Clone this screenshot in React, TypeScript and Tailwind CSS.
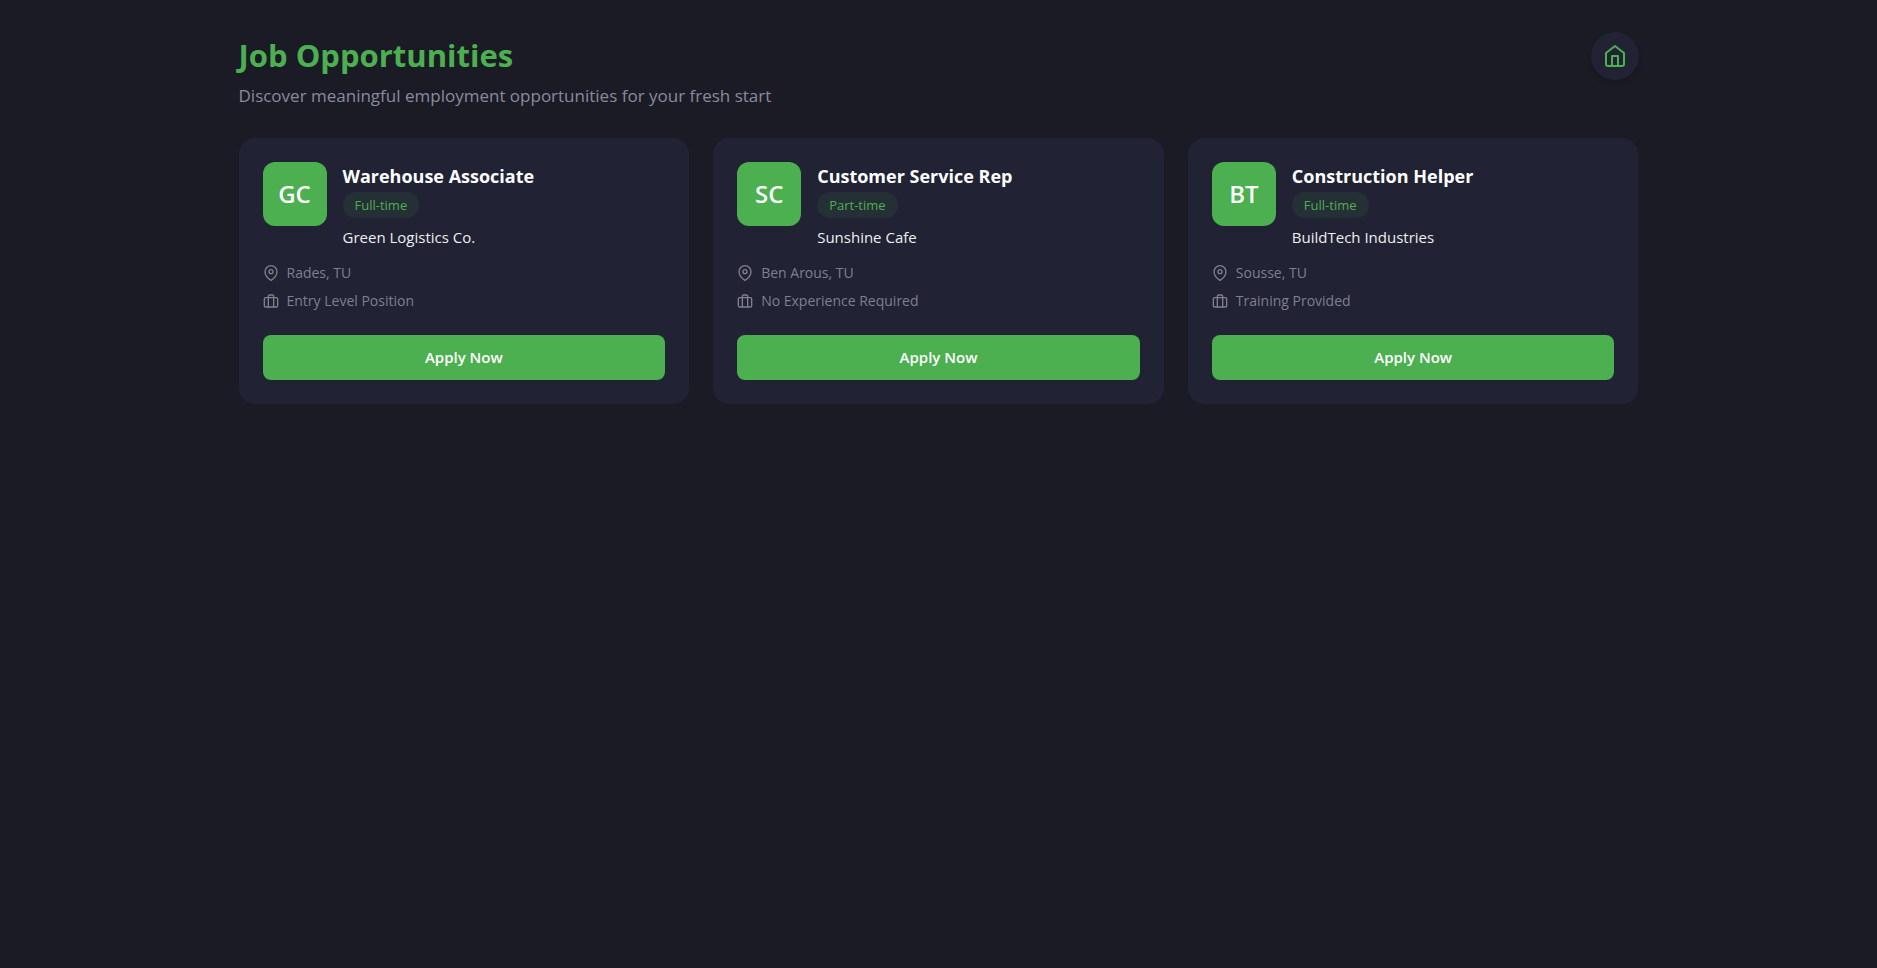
import type { ReactNode } from "react";

type Job = {
  initials: string;
  title: string;
  type: string;
  company: string;
  location: string;
  level: string;
};

const jobs: Job[] = [
  { initials: "GC", title: "Warehouse Associate", type: "Full-time", company: "Green Logistics Co.", location: "Rades, TU", level: "Entry Level Position" },
  { initials: "SC", title: "Customer Service Rep", type: "Part-time", company: "Sunshine Cafe", location: "Ben Arous, TU", level: "No Experience Required" },
  { initials: "BT", title: "Construction Helper", type: "Full-time", company: "BuildTech Industries", location: "Sousse, TU", level: "Training Provided" },
];

function Icon({ className, children }: { className: string; children: ReactNode }) {
  return (
    <svg
      viewBox="0 0 24 24"
      fill="none"
      stroke="currentColor"
      strokeWidth={2}
      strokeLinecap="round"
      strokeLinejoin="round"
      className={className}
      aria-hidden="true"
    >
      {children}
    </svg>
  );
}

function HomeIcon() {
  return (
    <Icon className="size-6">
      <path d="m3 9 9-7 9 7v11a2 2 0 0 1-2 2H5a2 2 0 0 1-2-2z" />
      <polyline points="9 22 9 12 15 12 15 22" />
    </Icon>
  );
}

function PinIcon() {
  return (
    <Icon className="size-4">
      <path d="M21 10c0 7-9 13-9 13s-9-6-9-13a9 9 0 0 1 18 0z" />
      <circle cx="12" cy="10" r="3" />
    </Icon>
  );
}

function CaseIcon() {
  return (
    <Icon className="size-4">
      <rect x="2" y="7" width="20" height="14" rx="2" ry="2" />
      <path d="M16 21V5a2 2 0 0 0-2-2h-4a2 2 0 0 0-2 2v16" />
    </Icon>
  );
}

function JobCard({ job }: { job: Job }) {
  return (
    <article className="rounded-2xl bg-[#212234] p-6">
      <div className="flex items-start gap-4">
        <div className="flex size-16 shrink-0 items-center justify-center rounded-xl bg-[#4caf50] text-2xl font-semibold text-white">
          {job.initials}
        </div>
        <div className="flex flex-col items-start">
          <h2 className="text-lg leading-7 font-bold text-white">{job.title}</h2>
          <span className="mt-0.5 rounded-full bg-[#4caf50]/10 px-3 text-[13px] leading-[26px] text-[#4caf50]">{job.type}</span>
          <p className="mt-[7px] text-[15px] leading-6 font-medium text-[#eeeeee]">{job.company}</p>
        </div>
      </div>
      <ul className="mt-3 flex flex-col gap-1 text-sm leading-6 text-[#7f7f90]">
        <li className="flex items-center gap-2"><PinIcon />{job.location}</li>
        <li className="flex items-center gap-2"><CaseIcon />{job.level}</li>
      </ul>
      <button type="button" className="mt-[22px] block w-full rounded-lg bg-[#4caf50] py-2.5 text-[15px] leading-[25px] font-semibold text-white">
        Apply Now
      </button>
    </article>
  );
}

export default function App() {
  return (
    <main className="min-h-screen bg-[#1b1b26] p-8 font-['Open_Sans','Noto_Sans',sans-serif]">
      <div className="mx-auto max-w-[1400px]">
        <header className="flex items-start justify-between pb-7">
          <div>
            <h1 className="text-[31px] leading-[46px] font-bold text-[#4caf50]">Job Opportunities</h1>
            <p className="mt-1 text-[17px] leading-7 text-[#8a8a9b]">Discover meaningful employment opportunities for your fresh start</p>
          </div>
          <a href="#home" aria-label="Home" className="flex size-12 shrink-0 items-center justify-center rounded-full bg-[#212234] text-[#4caf50] shadow-md">
            <HomeIcon />
          </a>
        </header>
        <section aria-label="Open positions" className="grid grid-cols-1 gap-6 md:grid-cols-2 lg:grid-cols-3">
          {jobs.map((job) => (
            <JobCard key={job.title} job={job} />
          ))}
        </section>
      </div>
    </main>
  );
}
